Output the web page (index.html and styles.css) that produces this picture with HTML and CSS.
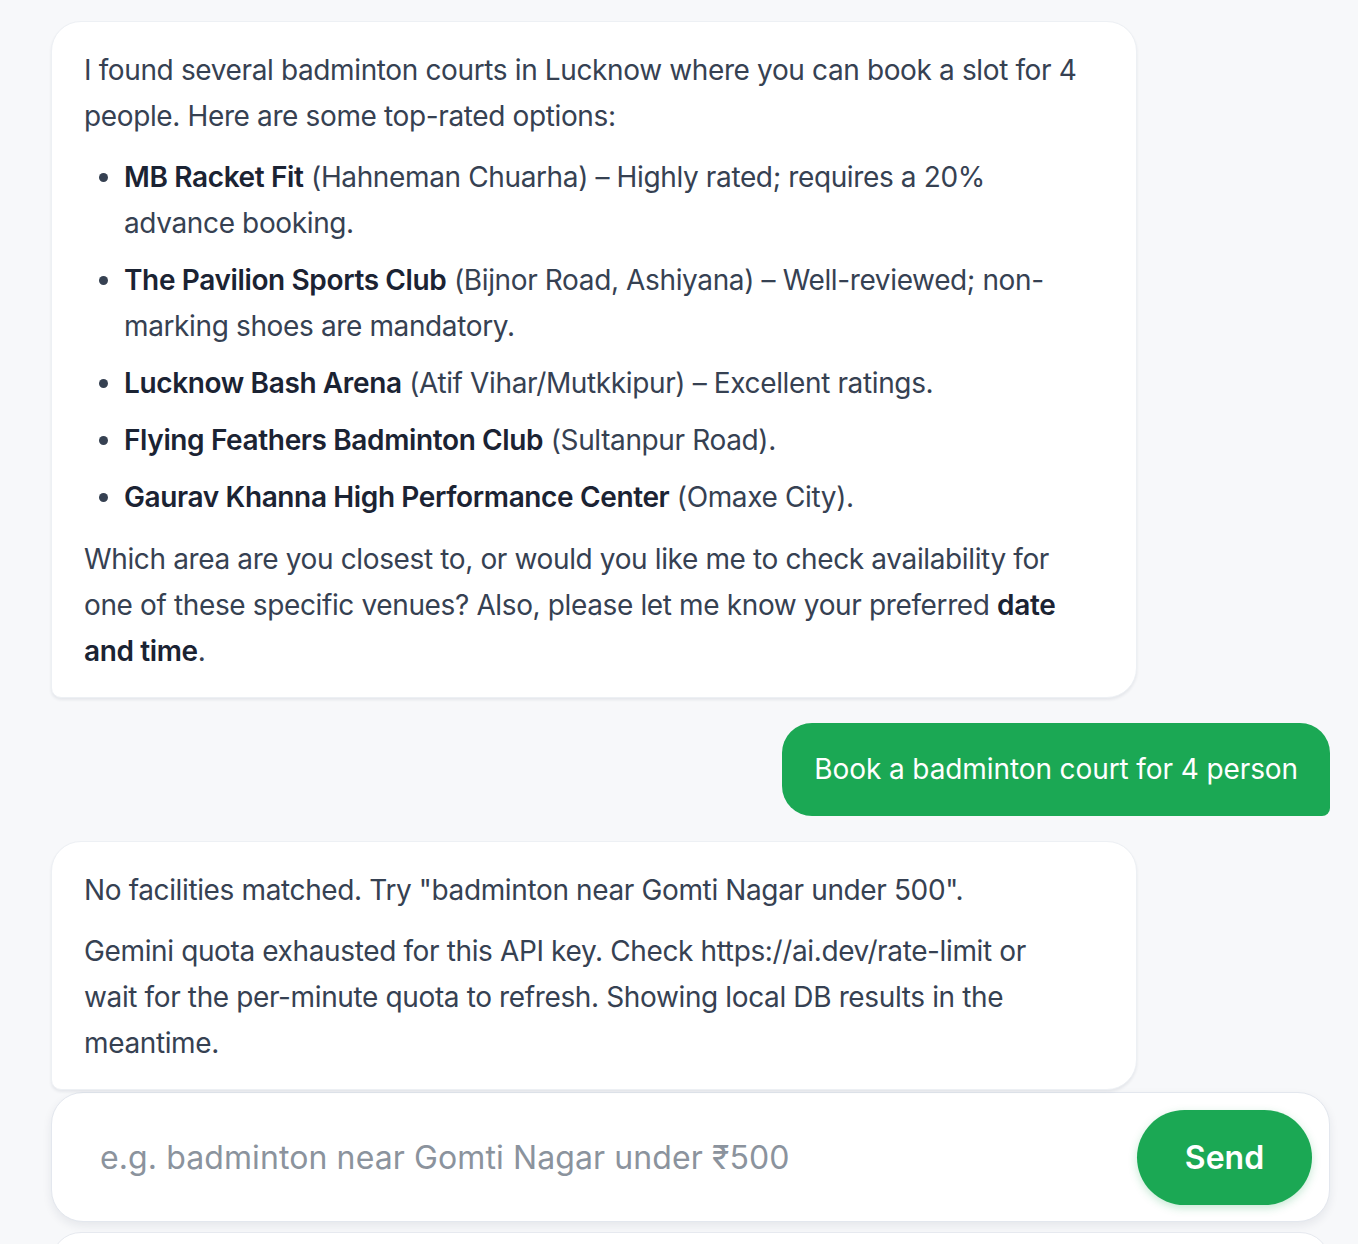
FILE: index.html
```html
<!DOCTYPE html>
<html lang="en">
<head>
    <meta charset="UTF-8">
    <meta name="viewport" content="width=device-width, initial-scale=1.0">
    <title>Court Finder Chat</title>
    <link rel="stylesheet" href="styles.css">
</head>
<body>
    <div class="chat">
        <div class="messages">
            <div class="bubble bot">
                <p>I found several badminton courts in Lucknow where you can book a slot for 4 people. Here are some top-rated options:</p>
                <ul>
                    <li><strong>MB Racket Fit</strong> (Hahneman Chuarha) – Highly rated; requires a 20% advance booking.</li>
                    <li><strong>The Pavilion Sports Club</strong> (Bijnor Road, Ashiyana) – Well-reviewed; non-marking shoes are mandatory.</li>
                    <li><strong>Lucknow Bash Arena</strong> (Atif Vihar/Mutkkipur) – Excellent ratings.</li>
                    <li><strong>Flying Feathers Badminton Club</strong> (Sultanpur Road).</li>
                    <li><strong>Gaurav Khanna High Performance Center</strong> (Omaxe City).</li>
                </ul>
                <p>Which area are you closest to, or would you like me to check availability for one of these specific venues? Also, please let me know your preferred <strong>date and time</strong>.</p>
            </div>

            <div class="bubble user">Book a badminton court for 4 person</div>

            <div class="bubble bot">
                <p>No facilities matched. Try "badminton near Gomti Nagar under 500".</p>
                <p>Gemini quota exhausted for this API key. Check https://ai.dev/rate-limit or wait for the per-minute quota to refresh. Showing local DB results in the meantime.</p>
            </div>
        </div>

        <form class="composer" onsubmit="return false;">
            <input type="text" class="composer-input" placeholder="e.g. badminton near Gomti Nagar under ₹500" autofocus>
            <button type="submit" class="send">Send</button>
        </form>

        <div class="results"></div>
    </div>
</body>
</html>
```

FILE: styles.css
```css
* {
    margin: 0;
    padding: 0;
    box-sizing: border-box;
}

body {
    background-color: #f7f8fa;
    font-family: Inter, "Noto Sans", sans-serif;
    color: #364152;
    overflow: hidden;
}

.chat {
    padding: 21px 28px 0 51px;
}

.messages {
    display: flex;
    flex-direction: column;
    gap: 25px;
}

.bubble {
    font-size: 28px;
    line-height: 46px;
    letter-spacing: -0.37px;
    border-radius: 30px;
}

.bot {
    align-self: flex-start;
    width: 1086px;
    background-color: #fff;
    border: 1px solid #edf0f4;
    border-bottom-left-radius: 10px;
    box-shadow: 0 2px 3px rgba(30, 41, 59, 0.08);
    padding: 25px 56px 23px 32px;
}

.bot p {
    margin-bottom: 15px;
}

.bot p:last-child {
    margin-bottom: 0;
}

.bot strong {
    font-weight: 600;
    color: #1b2333;
}

.bot ul {
    padding-left: 40px;
    margin-bottom: 16px;
}

.bot li {
    margin-bottom: 11px;
}

.bot li:last-child {
    margin-bottom: 0;
}

.user {
    align-self: flex-end;
    background-color: #1ba854;
    color: #fff;
    letter-spacing: -0.1px;
    border-bottom-right-radius: 8px;
    padding: 23px 32px 24px;
}

.composer {
    display: flex;
    align-items: center;
    margin-top: 2px;
    height: 130px;
    background-color: #fff;
    border: 1px solid #e3e7ee;
    border-radius: 32px;
    box-shadow: 0 4px 10px rgba(30, 41, 59, 0.08);
    padding: 0 17px 0 48px;
}

.composer-input {
    flex: 1;
    border: none;
    outline: none;
    background: transparent;
    font-family: inherit;
    font-size: 32px;
    letter-spacing: 0.1px;
    color: #1b2333;
    caret-color: #1b2333;
}

.composer-input::placeholder {
    color: #8b939d;
}

.send {
    width: 175px;
    height: 95px;
    border: none;
    border-radius: 48px;
    background-color: #1ba854;
    color: #fff;
    font-family: inherit;
    font-size: 32px;
    font-weight: 600;
    box-shadow: 0 3px 8px rgba(27, 168, 84, 0.25);
    cursor: pointer;
}

.results {
    margin-top: 10px;
    height: 60px;
    background-color: #fff;
    border: 1px solid #e6e9ef;
    border-radius: 30px;
}
```
